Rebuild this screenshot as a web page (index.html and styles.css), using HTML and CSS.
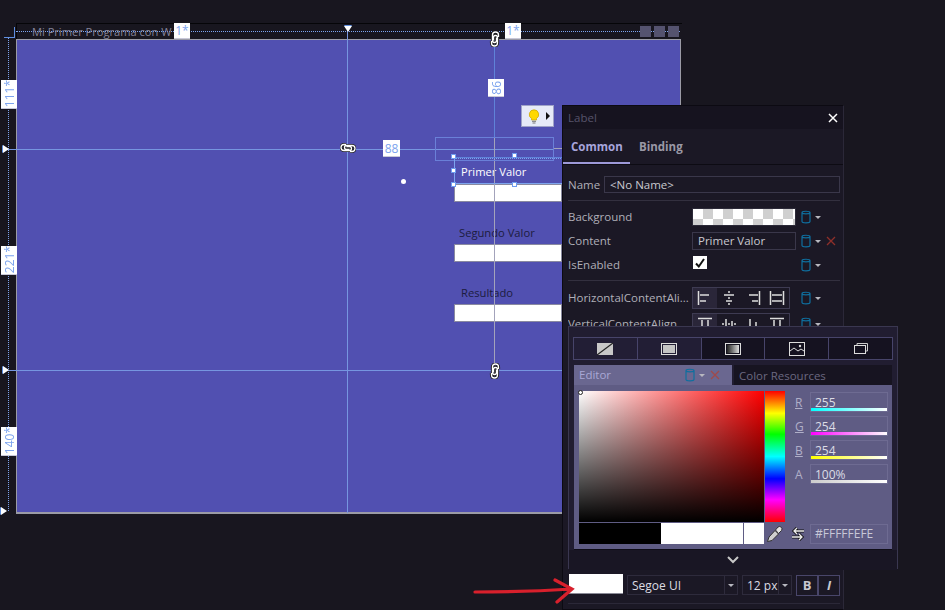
FILE: index.html
```html
<!DOCTYPE html>
<html lang="es">
<head>
    <meta charset="UTF-8">
    <meta name="viewport" content="width=device-width, initial-scale=1.0">
    <title>Mi Primer Programa con WPF</title>
    <link rel="stylesheet" href="styles.css">
</head>
<body>
    <svg class="defs" width="0" height="0">
        <symbol id="db" viewBox="0 0 10 14">
            <path d="M1 2.5C1 .8 9 .8 9 2.5V11.5C9 13.2 1 13.2 1 11.5ZM1 2.5C1 4.2 9 4.2 9 2.5" fill="none" stroke="#0f6f9f" stroke-width="1.2"/>
        </symbol>
        <symbol id="chain" viewBox="0 0 16 12">
            <path d="M6 2.5H4A3 3 0 0 0 4 8.5H9.5A2 2 0 0 0 9.5 4.5H6.5M10 9.500H12A3 3 0 0 0 12 3.500H6.500A2 2 0 0 0 6.500 7.500H9.500" fill="none" stroke="#222" stroke-width="3.200"/>
            <path d="M6 2.5H4A3 3 0 0 0 4 8.5H9.500A2 2 0 0 0 9.500 4.500H6.500M10 9.500H12A3 3 0 0 0 12 3.500H6.500A2 2 0 0 0 6.500 7.500H9.500" fill="none" stroke="#fff" stroke-width="1.300"/>
        </symbol>
    </svg>

    <div class="stage">
        <!-- superficie de diseno -->
        <div class="frame"></div>
        <div class="ruler-top"></div>
        <div class="win-title">Mi Primer Programa con W</div>
        <div class="win-buttons"><span></span><span></span><span></span></div>
        <div class="ruler-left"></div>
        <div class="corner"></div>
        <div class="window"></div>

        <div class="lbl lbl-sel">Primer Valor</div>
        <div class="txtbox b1"></div>
        <div class="lbl lbl-2">Segundo Valor</div>
        <div class="txtbox b2"></div>
        <div class="lbl lbl-3">Resultado</div>
        <div class="txtbox b3"></div>

        <div class="guide-v g-347"></div>
        <div class="guide-h g-149"></div>
        <div class="guide-h g-370"></div>
        <div class="guide-v g-494"></div>
        <div class="guide-gray"></div>
        <div class="guide-gray gray-h"></div>
        <div class="guide-h g-sel"></div>

        <div class="tri-down"></div>
        <div class="tri-right t-149"></div>
        <div class="tri-right t-370"></div>
        <div class="tri-right t-511"></div>

        <div class="tag tag-top t1">1*</div>
        <div class="tag tag-top t2">1*</div>
        <div class="tag tag-left l1"><span>111*</span></div>
        <div class="tag tag-left l2"><span>221*</span></div>
        <div class="tag tag-left l3"><span>140*</span></div>
        <div class="tag tag-left m86"><span>86</span></div>
        <div class="tag m88">88</div>

        <svg class="chain c1"><use href="#chain"/></svg>
        <svg class="chain c2"><use href="#chain"/></svg>
        <svg class="chain c3"><use href="#chain"/></svg>

        <div class="bulb">
            <svg width="12" height="15" viewBox="0 0 12 15">
                <path d="M6 .8A4.700 4.700 0 0 1 8.500 9.500V11H3.500V9.500A4.700 4.700 0 0 1 6 .8Z" fill="#ffd800" stroke="#c9a400" stroke-width=".7"/>
                <path d="M4 12.300H8M4.500 14H7.500" stroke="#777" stroke-width="1"/>
            </svg>
            <i class="bulb-arrow"></i>
        </div>

        <div class="margin-box"></div>
        <div class="sel-box"></div>
        <i class="handle h1"></i>
        <i class="handle h2"></i>
        <i class="handle h3"></i>
        <i class="handle h4"></i>
        <i class="handle h5"></i>
        <i class="rotate-dot"></i>

        <!-- panel de propiedades -->
        <div class="props">
            <div class="props-title">
                <span class="props-name">Label</span>
                <span class="grip"></span>
                <svg class="props-close" width="10" height="10" viewBox="0 0 10 10"><path d="M1 1L9 9M9 1L1 9" stroke="#fff" stroke-width="1.500"/></svg>
            </div>
            <div class="tabs">
                <div class="tab active">Common</div>
                <div class="tab">Binding</div>
            </div>
            <div class="props-body">
                <div class="row row-name">
                    <label>Name</label>
                    <div class="field">&lt;No Name&gt;</div>
                </div>
                <div class="sep"></div>
                <div class="row">
                    <label class="wide">Background</label>
                    <div class="checker"></div>
                    <svg class="db"><use href="#db"/></svg><i class="caret"></i>
                </div>
                <div class="row">
                    <label class="wide">Content</label>
                    <div class="field value">Primer Valor</div>
                    <svg class="db"><use href="#db"/></svg><i class="caret"></i>
                    <svg class="clear" width="10" height="10" viewBox="0 0 10 10"><path d="M1 1L9 9M9 1L1 9" stroke="#8e2f2a" stroke-width="1.300"/></svg>
                </div>
                <div class="row">
                    <label class="wide">IsEnabled</label>
                    <div class="value check-cell">
                        <div class="check"><svg width="12" height="12" viewBox="0 0 12 12"><path d="M2 6.500L4.800 9.500L10 2" fill="none" stroke="#111" stroke-width="2"/></svg></div>
                    </div>
                    <svg class="db"><use href="#db"/></svg><i class="caret"></i>
                </div>
                <div class="sep sep-2"></div>
                <div class="row row-align">
                    <label class="wide">HorizontalContentAli...</label>
                    <div class="align-group">
                        <span class="on"><svg width="16" height="14" viewBox="0 0 16 14"><path d="M1.500 0V14M3 4H12M3 10H9" stroke="#ddd" stroke-width="1.500"/></svg></span>
                        <span><svg width="16" height="14" viewBox="0 0 16 14"><path d="M8 0V2M8 6V8M8 12V14M3 4H13M5 10H11" stroke="#ddd" stroke-width="1.500"/></svg></span>
                        <span><svg width="16" height="14" viewBox="0 0 16 14"><path d="M14.500 0V14M4 4H13M7 10H13" stroke="#ddd" stroke-width="1.500"/></svg></span>
                        <span><svg width="16" height="14" viewBox="0 0 16 14"><path d="M1.500 0V14M14.500 0V14M3 4H13M3 10H13" stroke="#ddd" stroke-width="1.500"/></svg></span>
                    </div>
                    <svg class="db"><use href="#db"/></svg><i class="caret"></i>
                </div>
                <div class="row row-align">
                    <label class="wide">VerticalContentAlign...</label>
                    <div class="align-group">
                        <span class="on"><svg width="16" height="14" viewBox="0 0 16 14"><path d="M1 1.500H15M5 3V13M11 3V10" stroke="#ddd" stroke-width="1.500"/></svg></span>
                        <span><svg width="16" height="14" viewBox="0 0 16 14"><path d="M5 2V12M11 4V10M1 7H3M7 7H9M13 7H15" stroke="#ddd" stroke-width="1.500"/></svg></span>
                        <span><svg width="16" height="14" viewBox="0 0 16 14"><path d="M1 12.500H15M5 2V11M11 5V11" stroke="#ddd" stroke-width="1.500"/></svg></span>
                        <span><svg width="16" height="14" viewBox="0 0 16 14"><path d="M1 1.500H15M1 12.500H15M5 3V11M11 3V11" stroke="#ddd" stroke-width="1.500"/></svg></span>
                    </div>
                    <svg class="db"><use href="#db"/></svg><i class="caret"></i>
                </div>
            </div>
            <div class="props-foot">
                <div class="swatch"></div>
                <div class="combo combo-font"><span>Segoe UI</span><b><i class="caret"></i></b></div>
                <div class="combo combo-size"><span>12 px</span><b><i class="caret"></i></b></div>
                <div class="bi"><span class="b">B</span><span class="i">I</span></div>
            </div>
            <div class="foot-line"></div>
        </div>

        <!-- selector de color -->
        <div class="brush">
            <div class="brush-tabs">
                <span class="lite"><svg width="16" height="12" viewBox="0 0 16 12"><rect width="16" height="12" fill="#c8c8c8"/><path d="M0 12L16 0" stroke="#222" stroke-width="1.200"/></svg></span>
                <span class="lite"><svg width="16" height="12" viewBox="0 0 16 12"><rect x=".5" y=".5" width="15" height="11" fill="#221e35" stroke="#ddd"/><rect x="2" y="2" width="12" height="8" fill="#c4c4c4"/></svg></span>
                <span><svg width="16" height="12" viewBox="0 0 16 12"><defs><linearGradient id="gr"><stop offset="0" stop-color="#222"/><stop offset="1" stop-color="#ddd"/></linearGradient></defs><rect x=".5" y=".5" width="15" height="11" fill="#151220" stroke="#ddd"/><rect x="2" y="2" width="12" height="8" fill="url(#gr)"/></svg></span>
                <span><svg width="16" height="14" viewBox="0 0 16 14"><rect x=".5" y=".5" width="15" height="13" fill="none" stroke="#ddd"/><path d="M1 9L5 6L9 9L12 7L15 9" fill="none" stroke="#ddd"/><circle cx="11" cy="4" r="1.200" fill="#ddd"/></svg></span>
                <span><svg width="14" height="11" viewBox="0 0 14 11"><path d="M3 2V.5H13.500V8H11.500" fill="none" stroke="#ccc"/><rect x=".5" y="2.500" width="11" height="8" fill="none" stroke="#ddd"/></svg></span>
            </div>
            <div class="mode-tabs">
                <div class="mode mode-on">
                    <span>Editor</span>
                    <svg class="db db-mode"><use href="#db"/></svg><i class="caret caret-mode"></i>
                    <svg class="clear" width="10" height="10" viewBox="0 0 10 10"><path d="M1 1L9 9M9 1L1 9" stroke="#a04a4a" stroke-width="1.300"/></svg>
                </div>
                <div class="mode">Color Resources</div>
            </div>
            <div class="editor">
                <div class="sv"><i class="sv-thumb"></i></div>
                <div class="hue"></div>
                <div class="channels">
                    <div class="ch"><u>R</u><div class="ch-box">255<i class="bar bar-r"></i></div></div>
                    <div class="ch"><u>G</u><div class="ch-box">254<i class="bar bar-g"></i></div></div>
                    <div class="ch"><u>B</u><div class="ch-box">254<i class="bar bar-b"></i></div></div>
                    <div class="ch"><em>A</em><div class="ch-box">100%<i class="bar bar-a"></i></div></div>
                </div>
                <div class="preview"><span></span><span class="white"></span><span class="white last"></span></div>
                <svg class="dropper" width="17" height="18" viewBox="0 0 17 18">
                    <path d="M1.500 16.500L3 12L9 5.500L12.500 9L6 15.500Z" fill="#cfcfcf" stroke="#333" stroke-width="1"/>
                    <path d="M9.500 5L12 2A2.500 2.500 0 0 1 15.500 5.500L12.500 8.500Z" fill="#e4e4e4" stroke="#333" stroke-width="1"/>
                </svg>
                <div class="hex-cell">
                    <svg width="14" height="14" viewBox="0 0 14 14">
                        <path d="M13 4H3M6 1L3 4L6 7M1 10H11M8 7L11 10L8 13" fill="none" stroke="#111" stroke-width="3"/>
                        <path d="M13 4H3M6 1L3 4L6 7M1 10H11M8 7L11 10L8 13" fill="none" stroke="#eee" stroke-width="1.300"/>
                    </svg>
                    <div class="hex">#FFFFFEFE</div>
                </div>
            </div>
            <div class="expander"><svg width="12" height="8" viewBox="0 0 12 8"><path d="M1 1L6 6L11 1" fill="none" stroke="#c8c8c8" stroke-width="2"/></svg></div>
        </div>

        <svg class="arrow" width="110" height="30" viewBox="0 0 110 30"><path d="M5 17C40 17 70 16 102 14M85 5L102 14L87 27" fill="none" stroke="#d8202c" stroke-width="3.200" stroke-linecap="round"/></svg>
    </div>
</body>
</html>
```

FILE: styles.css
```css
/* Pagina */
body {
    margin: 0;
    background-color: #18161f;
    font-family: "Open Sans", "Noto Sans", sans-serif;
    font-size: 11.5px;
    color: #c8c8d0;
}
.defs {
    position: absolute;
}
.stage {
    position: relative;
    width: 945px;
    height: 610px;
    overflow: hidden;
}

/* Superficie de diseno */
.frame {
    position: absolute;
    left: 16px;
    top: 23px;
    width: 665px;
    height: 16px;
    border-top: 1px solid #050508;
    border-left: 1px solid #050508;
}
.window {
    position: absolute;
    left: 16px;
    top: 39px;
    width: 663px;
    height: 472px;
    background-color: #5150b1;
    border: 1px solid #9b9ba6;
    border-bottom-width: 2px;
}
.win-title {
    position: absolute;
    left: 32px;
    top: 24px;
    font-size: 11.1px;
    line-height: 16px;
    color: #85849a;
    white-space: nowrap;
}
.win-buttons {
    position: absolute;
    left: 640px;
    top: 26px;
    display: flex;
    gap: 3px;
}
.win-buttons span {
    width: 11px;
    height: 11px;
    background-color: #55536f;
}
.ruler-top {
    position: absolute;
    left: 16px;
    top: 31px;
    width: 664px;
    border-top: 1px dotted #7da4ee;
}
.ruler-left {
    position: absolute;
    left: 8px;
    top: 38px;
    height: 473px;
    border-left: 1px dotted #7da4ee;
}
.corner {
    position: absolute;
    left: 4px;
    top: 27px;
    width: 10px;
    height: 10px;
    border-right: 1px solid #5f8fe0;
    border-bottom: 1px solid #5f8fe0;
}

/* Guias */
.guide-v, .guide-h, .guide-gray {
    position: absolute;
    background-color: #7696e0;
}
.guide-v {
    width: 1px;
}
.guide-h {
    height: 1px;
}
.g-347 {
    left: 347px;
    top: 30px;
    height: 483px;
}
.g-494 {
    left: 494px;
    top: 39px;
    height: 98px;
    background-color: #5f82d8;
}
.guide-gray {
    left: 494px;
    top: 137px;
    width: 1px;
    height: 233px;
    background-color: #a3a3bb;
}
.gray-h {
    left: 553px;
    top: 148px;
    width: 9px;
    height: 1px;
}
.g-149 {
    left: 5px;
    top: 149px;
    width: 548px;
}
.g-370 {
    left: 5px;
    top: 370px;
    width: 557px;
}
.g-sel {
    left: 455px;
    top: 157px;
    width: 107px;
    background-color: #5f82d8;
}
.tri-down {
    position: absolute;
    left: 344px;
    top: 26px;
    border-left: 4px solid transparent;
    border-right: 4px solid transparent;
    border-top: 6px solid #fff;
    filter: drop-shadow(0 -1px 0 #5f8fe0);
}
.tri-right {
    position: absolute;
    left: 3px;
    border-top: 4px solid transparent;
    border-bottom: 4px solid transparent;
    border-left: 6px solid #fff;
    filter: drop-shadow(-1px 0 0 #5f8fe0);
}
.t-149 {
    top: 145px;
}
.t-370 {
    top: 366px;
}
.t-511 {
    top: 507px;
    left: 1px;
}

/* Etiquetas de medida */
.tag {
    position: absolute;
    background-color: #fff;
    color: #7da4ee;
    font-size: 12px;
    display: flex;
    align-items: center;
    justify-content: center;
    border-bottom: 1px solid #c8c8d8;
    box-sizing: border-box;
}
.tag-top {
    top: 23px;
    width: 16px;
    height: 16px;
}
.t1 {
    left: 174px;
}
.t2 {
    left: 505px;
}
.tag-left {
    left: 1px;
    width: 16px;
}
.tag-left span {
    writing-mode: vertical-rl;
    transform: rotate(180deg);
}
.l1 {
    top: 80px;
    height: 29px;
}
.l2 {
    top: 246px;
    height: 29px;
}
.l3 {
    top: 427px;
    height: 29px;
}
.m86 {
    left: 488px;
    top: 79px;
    height: 18px;
}
.m88 {
    left: 383px;
    top: 140px;
    width: 17px;
    height: 17px;
}

.chain {
    position: absolute;
    width: 16px;
    height: 12px;
}
.c1 {
    left: 487px;
    top: 33px;
    transform: rotate(90deg);
}
.c2 {
    left: 340px;
    top: 142px;
}
.c3 {
    left: 487px;
    top: 365px;
    transform: rotate(90deg);
}

/* Bombilla */
.bulb {
    position: absolute;
    left: 521px;
    top: 105px;
    width: 33px;
    height: 22px;
    box-sizing: border-box;
    background-color: #e6eaf8;
    border: 1px solid #9fa3c8;
    display: flex;
    align-items: center;
    gap: 6px;
    padding-left: 6px;
}
.bulb-arrow {
    border-top: 4px solid transparent;
    border-bottom: 4px solid transparent;
    border-left: 4px solid #111;
}

/* Controles seleccionados */
.margin-box {
    position: absolute;
    left: 435px;
    top: 137px;
    width: 117px;
    height: 22px;
    border: 1px solid #6a80d8;
}
.sel-box {
    position: absolute;
    left: 454px;
    top: 158px;
    width: 108px;
    height: 24px;
    border-top: 1px dotted #7da4ee;
    border-left: 1px solid #7da4ee;
    border-bottom: 1px solid #7da4ee;
}
.handle {
    position: absolute;
    width: 3px;
    height: 3px;
    background-color: #fff;
    border: 1px solid #6f9cf0;
}
.h1 {
    left: 451px;
    top: 154px;
}
.h2 {
    left: 512px;
    top: 153px;
}
.h3 {
    left: 451px;
    top: 168px;
}
.h4 {
    left: 451px;
    top: 182px;
}
.h5 {
    left: 512px;
    top: 182px;
}
.rotate-dot {
    position: absolute;
    left: 401px;
    top: 179px;
    width: 5px;
    height: 5px;
    border-radius: 50%;
    background-color: #fff;
}
.lbl {
    position: absolute;
    font-size: 11.2px;
    line-height: 16px;
    white-space: nowrap;
    color: #1c1c40;
}
.lbl-sel {
    left: 461px;
    top: 164px;
    color: #fff;
    font-weight: 500;
}
.lbl-2 {
    left: 459px;
    top: 225px;
}
.lbl-3 {
    left: 461px;
    top: 285px;
}
.txtbox {
    position: absolute;
    left: 454px;
    width: 108px;
    height: 18px;
    background-color: #fff;
    border: 1px solid #8a8aa0;
    box-sizing: border-box;
}
.b1 {
    top: 184px;
}
.b2 {
    top: 244px;
}
.b3 {
    top: 304px;
}

/* Panel de propiedades */
.props {
    position: absolute;
    left: 562px;
    top: 105px;
    width: 282px;
    height: 505px;
    box-sizing: border-box;
    background-color: #1b1825;
    border: 1px solid #0c0a12;
    border-right-color: #2b2838;
    display: flex;
    flex-direction: column;
}
.props-title {
    height: 23px;
    flex: none;
    display: flex;
    align-items: center;
    gap: 4px;
    padding: 0 5px;
    background-color: #16131f;
}
.props-name {
    color: #56536b;
}
.grip {
    flex: 1;
    height: 5px;
    background-image: radial-gradient(#4a4760 45%, transparent 50%);
    background-size: 2px 2px;
}
.props-close {
    margin: 0 0 0 5px;
}
.tabs {
    flex: none;
    display: flex;
    gap: 9px;
    height: 36px;
    border-bottom: 1px solid #0d0b13;
    box-sizing: border-box;
}
.tab {
    font-weight: 700;
    font-size: 11.5px;
    color: #9a98a6;
    line-height: 35px;
}
.tab.active {
    color: #a7a5dc;
    width: 59px;
    padding-left: 8px;
    border-bottom: 2px solid #9d99d8;
    height: 33px;
}
.props-body {
    padding: 11px 3px 0 5px;
}
.row {
    display: flex;
    align-items: center;
    height: 18px;
    margin-bottom: 6px;
}
.row label {
    color: #b0afb8;
    white-space: nowrap;
    overflow: hidden;
}
.row label.wide {
    width: 124px;
    flex: none;
    padding-bottom: 2px;
}
.row-name {
    height: 17px;
    margin-bottom: 0;
}
.row-name label {
    width: 36px;
    flex: none;
}
.row-name .field {
    flex: 1;
}
.field {
    height: 100%;
    box-sizing: border-box;
    border: 1px solid #3a374a;
    padding-left: 5px;
    color: #c9c9d0;
    line-height: 15px;
}
.value {
    width: 104px;
    flex: none;
}
.sep {
    height: 1px;
    background-color: #33303f;
    margin: 7px 0;
}
.sep-2 {
    margin: 0 0 6px;
}
.checker {
    width: 104px;
    height: 18px;
    flex: none;
    box-sizing: border-box;
    border: 1px solid #2c2a38;
    background-color: #fff;
    background-image: repeating-conic-gradient(#cfcfcf 0 25%, #fff 0 50%);
    background-size: 20px 20px;
}
.db {
    width: 10px;
    height: 14px;
    margin-left: 5px;
    flex: none;
}
.caret {
    display: inline-block;
    border-left: 3px solid transparent;
    border-right: 3px solid transparent;
    border-top: 3px solid #b8b8c0;
    margin-left: 4px;
}
.clear {
    margin-left: 5px;
}
.check-cell {
    height: 100%;
}
.check {
    width: 14px;
    height: 13px;
    margin: 0 1px;
    background-color: #fff;
    display: flex;
    align-items: center;
    justify-content: center;
}
.row-align {
    height: 22px;
    margin-bottom: 4px;
}
.align-group {
    width: 98px;
    height: 22px;
    flex: none;
    box-sizing: border-box;
    border: 1px solid #3e3b52;
    display: flex;
    margin-right: 6px;
}
.align-group + .db {
    margin-left: 5px;
}
.align-group span {
    flex: 1;
    display: flex;
    align-items: center;
    justify-content: center;
}
.align-group .on {
    background-color: #2a2639;
}
.props-foot {
    margin-top: auto;
    display: flex;
    gap: 4px;
    height: 22px;
    padding-left: 6px;
}
.swatch {
    width: 54px;
    height: 20px;
    box-sizing: border-box;
    background-color: #fff;
    border-bottom: 1px solid #8a8a96;
}
.combo {
    display: flex;
    align-items: center;
    height: 20px;
    margin-top: 1px;
    box-sizing: border-box;
    border: 1px solid #2e2b3c;
    color: #dcdce2;
    font-size: 12px;
}
.combo span {
    flex: 1;
    padding-left: 4px;
}
.combo b {
    width: 12px;
    height: 100%;
    border-left: 1px solid #2e2b3c;
    display: flex;
    align-items: center;
    justify-content: center;
}
.combo .caret {
    margin: 0;
}
.combo-font {
    width: 111px;
}
.combo-size {
    width: 50px;
}
.bi {
    width: 44px;
    height: 21px;
    margin-top: 1px;
    box-sizing: border-box;
    border: 1px solid #49466a;
    display: flex;
    gap: 2px;
    background-color: #49466a;
}
.bi span {
    flex: 1;
    background-color: #1b1825;
    color: #c8c8d0;
    font-size: 13px;
    font-weight: 700;
    text-align: center;
    line-height: 19px;
}
.bi .i {
    font-style: italic;
}
.foot-line {
    height: 1px;
    flex: none;
    margin: 7px 3px 5px 5px;
    background-color: #2b2838;
}

/* Selector de color */
.brush {
    position: absolute;
    left: 568px;
    top: 326px;
    width: 330px;
    height: 243px;
    box-sizing: border-box;
    background-color: #211d31;
    border: 1px solid #3a3750;
    padding: 10px 4px 0;
    display: flex;
    flex-direction: column;
}
.brush-tabs {
    display: flex;
    height: 23px;
    flex: none;
    box-sizing: border-box;
    border: 1px solid #47446a;
    background-color: #47446a;
    gap: 1px;
}
.brush-tabs span {
    flex: 1;
    background-color: #151220;
    display: flex;
    align-items: center;
    justify-content: center;
}
.brush-tabs .lite {
    background-color: #221e35;
}
.mode-tabs {
    margin: 5px 1px 0;
    display: flex;
    gap: 2px;
    height: 20px;
    flex: none;
}
.mode {
    flex: 1;
    background-color: #171421;
    color: #6b6880;
    line-height: 22px;
    padding-left: 5px;
}
.mode-on {
    flex: none;
    width: 158px;
    box-sizing: border-box;
    padding-right: 12px;
    background-color: #6a6790;
    color: #a9a7d6;
    display: flex;
    align-items: center;
}
.mode-on span {
    flex: 1;
}
.db-mode {
    margin: 0;
}
.caret-mode {
    margin-left: 4px;
}
.editor {
    flex: 1;
    margin: 0 1px;
    background-color: #5f5c84;
    padding: 6px 4px 5px 5px;
    display: grid;
    grid-template-columns: 185px 21px 103px;
    grid-template-rows: 131px 21px;
    row-gap: 1px;
    border-bottom: 1px solid #0f0d17;
}
.sv {
    position: relative;
    background: linear-gradient(to top, #000, transparent), linear-gradient(to right, #fff, #f00);
}
.sv-thumb {
    position: absolute;
    left: -1px;
    top: -1px;
    width: 3px;
    height: 3px;
    border-radius: 50%;
    border: 1px solid #222;
    background-color: #fff;
}
.hue {
    margin-left: 1px;
    background: linear-gradient(to bottom, #f00, #ff0 17%, #0f0 33%, #0ff 50%, #00f 67%, #f0f 83%, #f00);
}
.channels {
    display: flex;
    flex-direction: column;
    gap: 4px;
    padding-top: 1px;
}
.ch {
    display: flex;
    height: 20px;
    align-items: center;
    color: #b0afc8;
    font-size: 12px;
}
.ch u, .ch em {
    width: 25px;
    box-sizing: border-box;
    padding-left: 10px;
    font-style: normal;
    flex: none;
}
.ch-box {
    position: relative;
    width: 78px;
    height: 20px;
    box-sizing: border-box;
    border: 1px solid #6e6b92;
    padding-left: 4px;
    color: #dcdce6;
    line-height: 19px;
}
.bar {
    position: absolute;
    left: 0;
    right: 0;
    bottom: 0;
    height: 3px;
}
.bar-r {
    background: linear-gradient(to right, #0ff, #fff);
}
.bar-g {
    background: linear-gradient(to right, #f0f, #fff);
}
.bar-b {
    background: linear-gradient(to right, #ff0, #fff);
}
.bar-a {
    background: linear-gradient(to right, #ccc, #fff);
}
.preview {
    display: flex;
}
.preview span {
    width: 82px;
    background-color: #000;
}
.preview .white {
    background-color: #fff;
}
.preview .last {
    width: 20px;
    margin-left: 1px;
}
.dropper {
    align-self: center;
    justify-self: center;
}
.hex-cell {
    display: flex;
    align-items: center;
    justify-content: space-between;
    padding-left: 6px;
}
.hex {
    width: 78px;
    height: 20px;
    box-sizing: border-box;
    border: 1px solid #6e6b92;
    padding-left: 4px;
    color: #c8c8d8;
    font-size: 12px;
    line-height: 18px;
}
.expander {
    height: 20px;
    flex: none;
    margin: 0 -4px;
    background-color: #191624;
    display: flex;
    align-items: center;
    justify-content: center;
}
.arrow {
    position: absolute;
    left: 470px;
    top: 575px;
}
```
